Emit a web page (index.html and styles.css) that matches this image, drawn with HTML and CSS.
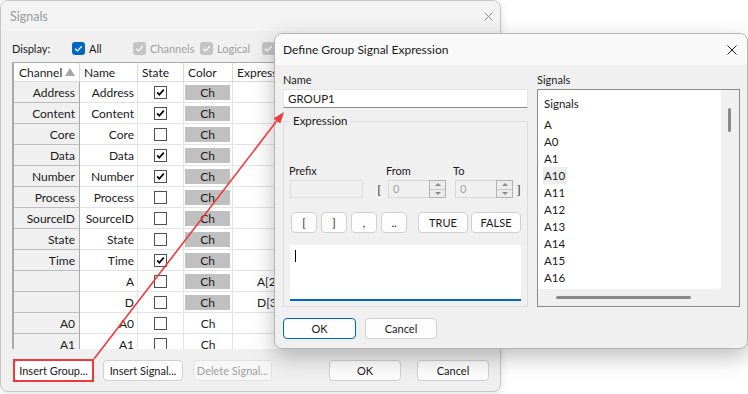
FILE: index.html
```html
<!DOCTYPE html>
<html lang="en">
<head>
<meta charset="utf-8">
<title>Signals</title>
<link rel="stylesheet" href="styles.css">
</head>
<body>
<div class="desk">

<!-- background window -->
<div class="win sigwin">
	<div class="titlebar sig-title">
		<span class="title">Signals</span>
		<svg class="xbtn" width="9" height="9" viewBox="0 0 9 9"><path d="M0.5 0.5 8.5 8.5 M8.5 0.5 0.5 8.5"/></svg>
	</div>
	<div class="client">
		<div class="display-row">
			<span class="disp-label">Display:</span>
			<span class="opt w-all"><span class="cb on"><svg viewBox="0 0 13 13"><path d="M3.2 6.7 5.4 8.9 9.8 4.3"/></svg></span>All</span>
			<span class="opt w-ch dis"><span class="cb"><svg viewBox="0 0 13 13"><path d="M3.2 6.7 5.4 8.9 9.8 4.3"/></svg></span>Channels</span>
			<span class="opt w-lg dis"><span class="cb"><svg viewBox="0 0 13 13"><path d="M3.2 6.7 5.4 8.9 9.8 4.3"/></svg></span>Logical</span>
			<span class="opt dis"><span class="cb"><svg viewBox="0 0 13 13"><path d="M3.2 6.7 5.4 8.9 9.8 4.3"/></svg></span>Bus</span>
		</div>

		<div class="grid">
			<div class="h">Channel<svg class="sort" width="10" height="8" viewBox="0 0 10 8"><path d="M5 0 10 8 0 8Z"/></svg></div>
			<div class="h">Name</div>
			<div class="h">State</div>
			<div class="h">Color</div>
			<div class="h">Expression</div>

			<div class="c ch">Address</div><div class="c nm">Address</div><div class="c st"><span class="tcb"><svg viewBox="0 0 11 11"><path d="M2.2 5.4 4.3 7.8 8.8 2.6"/></svg></span></div><div class="c co"><span class="sw">Ch</span></div><div class="c ex"></div>
			<div class="c ch">Content</div><div class="c nm">Content</div><div class="c st"><span class="tcb"><svg viewBox="0 0 11 11"><path d="M2.2 5.4 4.3 7.8 8.8 2.6"/></svg></span></div><div class="c co"><span class="sw">Ch</span></div><div class="c ex"></div>
			<div class="c ch">Core</div><div class="c nm">Core</div><div class="c st"><span class="tcb"></span></div><div class="c co"><span class="sw">Ch</span></div><div class="c ex"></div>
			<div class="c ch">Data</div><div class="c nm">Data</div><div class="c st"><span class="tcb"><svg viewBox="0 0 11 11"><path d="M2.2 5.4 4.3 7.8 8.8 2.6"/></svg></span></div><div class="c co"><span class="sw">Ch</span></div><div class="c ex"></div>
			<div class="c ch">Number</div><div class="c nm">Number</div><div class="c st"><span class="tcb"><svg viewBox="0 0 11 11"><path d="M2.2 5.4 4.3 7.8 8.8 2.6"/></svg></span></div><div class="c co"><span class="sw">Ch</span></div><div class="c ex"></div>
			<div class="c ch">Process</div><div class="c nm">Process</div><div class="c st"><span class="tcb"></span></div><div class="c co"><span class="sw">Ch</span></div><div class="c ex"></div>
			<div class="c ch">SourceID</div><div class="c nm">SourceID</div><div class="c st"><span class="tcb"></span></div><div class="c co"><span class="sw">Ch</span></div><div class="c ex"></div>
			<div class="c ch">State</div><div class="c nm">State</div><div class="c st"><span class="tcb"></span></div><div class="c co"><span class="sw">Ch</span></div><div class="c ex"></div>
			<div class="c ch">Time</div><div class="c nm">Time</div><div class="c st"><span class="tcb"><svg viewBox="0 0 11 11"><path d="M2.2 5.4 4.3 7.8 8.8 2.6"/></svg></span></div><div class="c co"><span class="sw">Ch</span></div><div class="c ex"></div>
			<div class="c ch"></div><div class="c nm">A</div><div class="c st"><span class="tcb"></span></div><div class="c co"><span class="sw">Ch</span></div><div class="c ex">A[23:0]</div>
			<div class="c ch"></div><div class="c nm">D</div><div class="c st"><span class="tcb"></span></div><div class="c co"><span class="sw">Ch</span></div><div class="c ex">D[31:0]</div>
			<div class="c ch">A0</div><div class="c nm">A0</div><div class="c st"><span class="tcb"></span></div><div class="c co plain">Ch</div><div class="c ex"></div>
			<div class="c ch">A1</div><div class="c nm">A1</div><div class="c st"><span class="tcb"></span></div><div class="c co plain">Ch</div><div class="c ex"></div>
		</div>

		<div class="btn-row">
			<button class="btn w79">Insert Group...</button>
			<button class="btn w80">Insert Signal...</button>
			<button class="btn w79" disabled>Delete Signal...</button>
			<span class="fill"></span>
			<button class="btn w72">OK</button>
			<button class="btn w72">Cancel</button>
		</div>
	</div>
</div>

<!-- modal dialog -->
<div class="win dlg">
	<div class="titlebar dlg-title">
		<span class="title">Define Group Signal Expression</span>
		<svg class="xbtn" width="10" height="10" viewBox="0 0 10 10"><path d="M0.5 0.5 9.5 9.5 M9.5 0.5 0.5 9.5"/></svg>
	</div>
	<div class="dlg-body">
		<div class="col-left">
			<div class="lbl">Name</div>
			<div class="textbox">GROUP1</div>

			<fieldset class="grp">
				<legend>Expression</legend>
				<div class="range">
					<span class="rl">Prefix</span><span></span><span class="rl">From</span><span></span><span class="rl">To</span><span></span>
					<span class="tb-dis"></span>
					<span class="brk">[</span>
					<span class="spin"><span class="val">0</span><span class="arrows"><i class="up"></i><i class="dn"></i></span></span>
					<span></span>
					<span class="spin"><span class="val">0</span><span class="arrows"><i class="up"></i><i class="dn"></i></span></span>
					<span class="brk r">]</span>
				</div>
				<div class="ops">
					<button class="btn op">[</button>
					<button class="btn op">]</button>
					<button class="btn op">,</button>
					<button class="btn op">..</button>
					<button class="btn op wide gap">TRUE</button>
					<button class="btn op wide">FALSE</button>
				</div>
				<div class="expr"><span class="caret"></span></div>
			</fieldset>

			<div class="dlg-btns">
				<button class="btn def">OK</button>
				<button class="btn">Cancel</button>
			</div>
		</div>

		<div class="col-right">
			<div class="lbl">Signals</div>
			<div class="listbox">
				<div class="lb-view">
					<div class="lb-head">Signals</div>
					<ul class="lb-items">
						<li><span>A</span></li>
						<li><span>A0</span></li>
						<li><span>A1</span></li>
						<li class="sel"><span>A10</span></li>
						<li><span>A11</span></li>
						<li><span>A12</span></li>
						<li><span>A13</span></li>
						<li><span>A14</span></li>
						<li><span>A15</span></li>
						<li><span>A16</span></li>
						<li><span>A17</span></li>
					</ul>
				</div>
				<div class="vscroll"><span class="thumb"></span></div>
				<div class="hscroll"><span class="thumb"></span></div>
				<div class="corner"></div>
			</div>
		</div>
	</div>
</div>

<!-- red annotation -->
<svg class="annot" width="748" height="394" viewBox="0 0 748 394">
	<rect x="14" y="360" width="79" height="21"/>
	<line x1="94" y1="359" x2="279" y2="118"/>
	<polygon points="284,112 280.3,123.6 273.6,118.5"/>
</svg>

</div>
</body>
</html>
```

FILE: styles.css
```css
:root {
	--face      : #f0f0f0;
	--btn-face  : #fdfdfd;
	--btn-line  : #d0d0d0;
	--grid-line : #e3e3e3;
	--hdr-line  : #a9a9a9;
	--accent    : #0067c0;
	--mark      : #ee3a3a;
	--text      : #1a1a1a;
	--dim       : #a0a0a0;
}
* {
	box-sizing : border-box;
}
body {
	margin      : 0;
	background  : #fff;
	font-family : Lato, "Noto Sans", sans-serif;
	font-size   : 11px;
	color       : var(--text);
}
button {
	font : inherit;
}
.desk {
	position : relative;
	width    : 748px;
	height   : 394px;
	overflow : hidden;
}

/* windows */
.win {
	position       : absolute;
	display        : flex;
	flex-direction : column;
	background     : var(--face);
	border         : 1px solid #c6c6c6;
	border-radius  : 8px;
	overflow       : hidden;
}
.sigwin {
	left       : 0;
	top        : 0;
	width      : 501px;
	height     : 392px;
	box-shadow : 0 2px 8px rgba(0,0,0,0.12);
}
.dlg {
	left         : 274px;
	top          : 33px;
	width        : 474px;
	height       : 316px;
	border-color : #b5b5b5;
	box-shadow   : 0 8px 22px rgba(0,0,0,0.26);
}
.titlebar {
	flex            : none;
	display         : flex;
	align-items     : center;
	justify-content : space-between;
}
.titlebar .title {
	font-size : 12.5px;
}
.dlg-title .title {
	font-size : 12px;
}
.xbtn path {
	fill         : none;
	stroke-width : 1;
}
.sig-title {
	height     : 30px;
	padding    : 0 7px 0 9px;
	background : #f3f3f3;
	color      : #9a9a9a;
}
.sig-title .xbtn path {
	stroke : #8e8e8e;
}
.dlg-title {
	height     : 31px;
	padding    : 0 10px 0 8px;
	background : #f9f9f9;
}
.dlg-title .xbtn path {
	stroke : #1a1a1a;
}

/* Signals window */
.client {
	flex           : 1;
	display        : flex;
	flex-direction : column;
	padding        : 0 11px 0 11px;
}
.display-row {
	display     : flex;
	align-items : center;
	height      : 18px;
	margin-top  : 8px;
	white-space : nowrap;
}
.disp-label {
	width : 60px;
}
.opt {
	display     : flex;
	align-items : center;
	gap         : 4px;
}
.w-all { width : 61px; }
.w-ch  { width : 67px; }
.w-lg  { width : 62px; }
.opt.dis {
	color : var(--dim);
}
.cb {
	width         : 13px;
	height        : 13px;
	border-radius : 3px;
	background    : #c4c4c4;
	display       : flex;
}
.cb.on {
	background : var(--accent);
}
.cb svg {
	width        : 13px;
	height       : 13px;
	fill         : none;
	stroke       : #fff;
	stroke-width : 1.3;
}

.grid {
	margin-top            : 5px;
	height                : 287px;
	overflow              : hidden;
	display               : grid;
	grid-template-columns : 66px 58px 46px 49px 1fr;
	grid-template-rows    : 19px;
	grid-auto-rows        : 21px;
	background            : #fff;
	border-left           : 2px solid var(--hdr-line);
	border-top            : 1px solid var(--hdr-line);
	font-size             : 12px;
}
.h, .c {
	display       : flex;
	align-items   : center;
	border-right  : 1px solid var(--grid-line);
	border-bottom : 1px solid var(--grid-line);
	white-space   : nowrap;
	overflow      : hidden;
}
.h {
	padding-left : 4px;
	border-color : #dadada;
}
.h:first-child {
	padding-left : 5px;
}
.sort {
	margin-left : 3px;
	fill        : #a6a6a6;
}
.c.ch {
	justify-content : flex-end;
	padding-right   : 4px;
	background      : var(--face);
	border-right    : 1px solid var(--hdr-line);
	border-bottom   : 1px solid #bdbdbd;
}
.c.nm {
	justify-content : flex-end;
	padding-right   : 3px;
}
.c.st {
	justify-content : center;
	padding-right   : 1px;
}
.tcb {
	width      : 13px;
	height     : 13px;
	border     : 1px solid #505050;
	background : #fff;
	display    : flex;
}
.tcb svg {
	width        : 11px;
	height       : 11px;
	fill         : none;
	stroke       : #000;
	stroke-width : 1.7;
}
.c.co {
	padding-left : 1px;
}
.c.co.plain {
	justify-content : center;
	padding-left    : 0;
}
.sw {
	width           : 45px;
	height          : 15px;
	background      : #c0c0c0;
	display         : flex;
	align-items     : center;
	justify-content : center;
}
.c.ex {
	padding-left : 24px;
}

.btn-row {
	display     : flex;
	gap         : 10px;
	margin-top  : 11px;
	padding-left: 2px;
	padding-right: 0;
	height      : 21px;
}
.btn-row .fill {
	flex : 1;
}
.btn-row .w72 + .w72 {
	margin-left : 6px;
}
.btn {
	height        : 21px;
	padding       : 0;
	background    : var(--btn-face);
	border        : 1px solid var(--btn-line);
	border-radius : 4px;
	color         : var(--text);
}
.btn:disabled {
	color        : var(--dim);
	border-color : #e2e2e2;
	background   : #f7f7f7;
}
.w79 { width : 79px; }
.w80 { width : 80px; }
.w72 { width : 72px; }

/* dialog */
.dlg-body {
	display               : grid;
	grid-template-columns : 245px 203px;
	column-gap            : 9px;
	padding               : 7px 7px 0 8px;
}
.lbl {
	line-height : 16px;
}
.textbox {
	margin-top    : 1px;
	height        : 19px;
	padding-left  : 4px;
	line-height   : 17px;
	background    : #fff;
	border        : 1px solid #e5e5e5;
	border-bottom : 1px solid #8a8a8a;
	font-size     : 11.5px;
}
.grp {
	margin     : 5px 0 0 0;
	padding    : 0 6px 5px 6px;
	border     : 1px solid #dcdcdc;
	min-width  : 0;
}
.grp legend {
	padding     : 0 3px;
	line-height : 16px;
	font-size   : 11.5px;
}
.range {
	margin-top            : 33px;
	display               : grid;
	grid-template-columns : 73px 25px 58px 9px 58px 1fr;
	grid-template-rows    : 16px 18px;
	row-gap               : 2px;
	align-items           : center;
}
.rl {
	margin-left : -1px;
}
.rl + span + .rl {
	margin-left : -2px;
}
.tb-dis {
	height     : 18px;
	background : #f0f0f0;
	border     : 1px solid #dedede;
}
.brk {
	text-align    : right;
	padding-right : 7px;
	font-size     : 12px;
}
.brk.r {
	text-align   : left;
	padding-left : 4px;
}
.spin {
	height      : 18px;
	display     : flex;
	border      : 1px solid #d8d8d8;
	background  : #f0f0f0;
}
.spin .val {
	flex         : 1;
	padding-left : 4px;
	line-height  : 16px;
	color        : var(--dim);
}
.spin .arrows {
	width          : 17px;
	margin         : -1px -1px -1px 0;
	display        : flex;
	flex-direction : column;
	border         : 1px solid #b3b3b3;
	background     : #ececec;
}
.arrows i {
	flex            : 1;
	display         : flex;
	align-items     : center;
	justify-content : center;
}
.arrows i + i {
	border-top : 1px solid #c8c8c8;
}
.arrows i::before {
	content      : "";
	border-left  : 3px solid transparent;
	border-right : 3px solid transparent;
}
.arrows .up::before {
	border-bottom : 3px solid #8a8a8a;
}
.arrows .dn::before {
	border-top : 3px solid #8a8a8a;
}
.ops {
	display     : flex;
	gap         : 4px;
	margin-top  : 14px;
	padding-left: 1px;
}
.btn.op {
	width : 26px;
}
.btn.op.wide {
	width : 50px;
}
.btn.op.gap {
	margin-left : 7px;
}
.btn.op.wide + .btn.op.wide {
	margin-left : -1px;
}
.expr {
	margin-top    : 12px;
	height        : 56px;
	background    : #fff;
	border-bottom : 2px solid var(--accent);
	padding       : 5px 0 0 5px;
}
.caret {
	display    : block;
	width      : 1px;
	height     : 12px;
	background : #000;
}
.dlg-btns {
	display    : flex;
	gap        : 9px;
	margin-top : 11px;
}
.dlg-btns .btn {
	width  : 72px;
}
.dlg-btns .btn.def {
	width        : 73px;
	border-color : var(--accent);
}

.listbox {
	margin-top            : 1px;
	height                : 218px;
	display               : grid;
	grid-template-columns : 1fr 18px;
	grid-template-rows    : 1fr 17px;
	border                : 1px solid #8a8a8a;
	background            : #f0f0f0;
}
.lb-view {
	background                 : #fff;
	border-bottom-right-radius : 4px;
	overflow                   : hidden;
	padding                    : 5px 0 0 6px;
}
.lb-head {
	line-height   : 17px;
	margin-bottom : 4px;
	font-size     : 11.5px;
}
.lb-items {
	list-style : none;
	margin     : 0;
	padding    : 0;
	font-size  : 11.5px;
}
.lb-items li {
	height      : 17px;
	line-height : 17px;
}
.lb-items span {
	display     : inline-block;
	padding     : 0 2px 0 1px;
	margin-left : -1px;
}
.lb-items .sel span {
	background : #ededed;
}
.vscroll {
	padding : 18px 0 0 7px;
}
.vscroll .thumb {
	display       : block;
	width         : 3px;
	height        : 24px;
	border-radius : 2px;
	background    : #8a8a8a;
}
.hscroll {
	padding : 7px 0 0 18px;
}
.hscroll .thumb {
	display       : block;
	width         : 135px;
	height        : 3px;
	border-radius : 2px;
	background    : #8a8a8a;
}

/* annotation overlay */
.annot {
	position       : absolute;
	left           : 0;
	top            : 0;
	pointer-events : none;
}
.annot rect {
	fill         : none;
	stroke       : var(--mark);
	stroke-width : 2;
}
.annot line {
	stroke       : var(--mark);
	stroke-width : 1.6;
}
.annot polygon {
	fill : var(--mark);
}
```
